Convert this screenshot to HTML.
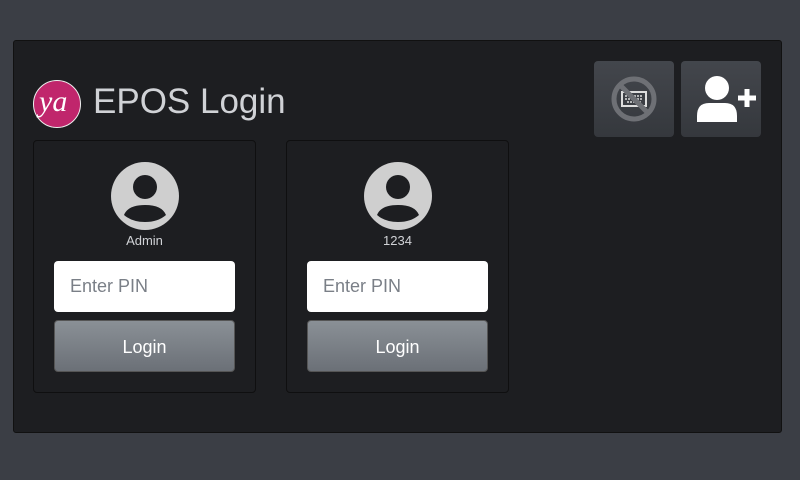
<!DOCTYPE html>
<html><head><style>
body{margin:0;width:800px;height:480px;background:#3b3e45;font-family:"Liberation Sans",sans-serif;position:relative;overflow:hidden}
.panel{position:absolute;left:13px;top:40px;width:767px;height:391px;background:#1d1e21;border:1px solid #111;border-radius:3px}
.title{position:absolute;left:93px;top:82px;font-size:35px;color:#d0d2d6}
.logo{position:absolute;left:33px;top:80px;width:48px;height:48px;border-radius:50%;background:#c0266c;border:1px solid #eee;box-sizing:border-box}
.logo span{position:absolute;left:5px;top:4px;color:#fff;font:italic 30px "Liberation Serif",serif}
.card{position:absolute;top:140px;width:221px;height:251px;border:1px solid #0f0f10;border-radius:4px;background:#1d1e21}
.av{position:absolute;left:76px;top:20px}
.name{position:absolute;top:92px;width:100%;text-align:center;font-size:13px;color:#d0d2d6}
.inp{position:absolute;left:20px;top:120px;width:181px;height:51px;background:#fff;border-radius:4px;box-sizing:border-box;padding:15px 16px;font-size:18px;color:#7a7f87}
.btn{position:absolute;left:20px;top:179px;width:181px;height:52px;border-radius:4px;background:linear-gradient(#8a9096,#6b7077);color:#fff;font-size:18px;text-align:center;line-height:52px;box-sizing:border-box;border:1px solid #555}
.tb{position:absolute;top:61px;width:80px;height:76px;border-radius:4px;background:linear-gradient(#43464c,#35383d)}
</style></head><body>
<div class="panel"></div>
<div class="logo"><span>ya</span></div>
<div class="title">EPOS Login</div>
<div class="tb" style="left:594px"><svg width="80" height="76"><circle cx="40" cy="38" r="20" fill="none" stroke="#6e7075" stroke-width="5"/><rect x="28" y="31" width="24" height="14" fill="none" stroke="#ddd" stroke-width="2"/><path d="M31 35h18M31 38h18M33 41h14" stroke="#ddd" stroke-width="1.5" stroke-dasharray="2 1"/><path d="M26 24L54 52" stroke="#6e7075" stroke-width="5"/></svg></div>
<div class="tb" style="left:681px"><svg width="80" height="76"><circle cx="36" cy="27" r="12" fill="#fff"/><path d="M16 61v-6q0-13 12-13h16q12 0 12 13v6z" fill="#fff"/><path d="M57 37h18M66 28v18" stroke="#fff" stroke-width="5"/></svg></div>
<div class="card" style="left:33px">
<svg class="av" width="70" height="70"><circle cx="35" cy="35" r="34" fill="#cfcfcf"/><circle cx="35" cy="26" r="12" fill="#1d1e21"/><path d="M14 54q4-10 21-10t21 10q-8 7-21 7t-21-7z" fill="#1d1e21"/></svg>
<div class="name">Admin</div><div class="inp">Enter PIN</div><div class="btn">Login</div></div>
<div class="card" style="left:286px">
<svg class="av" width="70" height="70"><circle cx="35" cy="35" r="34" fill="#cfcfcf"/><circle cx="35" cy="26" r="12" fill="#1d1e21"/><path d="M14 54q4-10 21-10t21 10q-8 7-21 7t-21-7z" fill="#1d1e21"/></svg>
<div class="name">1234</div><div class="inp">Enter PIN</div><div class="btn">Login</div></div>
</body></html>
